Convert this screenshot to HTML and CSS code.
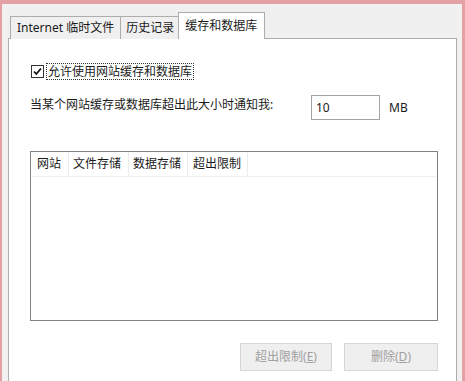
FILE: index.html
```html
<!DOCTYPE html>
<html>
<head>
<meta charset="utf-8" />
<title>网站数据设置</title>
<link rel="stylesheet" href="styles.css">
</head>
<body>
<div class="frame">
  <div class="tabs">
    <div class="tab">Internet 临时文件</div>
    <div class="tab narrow">历史记录</div>
    <div class="tab active">缓存和数据库</div>
  </div>
  <div class="panel">
    <div class="allow">
      <span class="check">
        <svg width="11" height="11" viewBox="0 0 11 11"><path d="M2 5.5 L4.3 8 L9 2.5" fill="none" stroke="#111" stroke-width="1.8"/></svg>
      </span>
      <span class="focus">允许使用网站缓存和数据库</span>
    </div>
    <div class="limit">
      <span class="limit-text">当某个网站缓存或数据库超出此大小时通知我:</span>
      <span class="size">10</span>
      <span class="unit">MB</span>
    </div>
    <div class="list">
      <div class="list-head">
        <span class="col c1">网站</span>
        <span class="col c2">文件存储</span>
        <span class="col c3">数据存储</span>
        <span class="col c4">超出限制</span>
      </div>
    </div>
    <div class="actions">
      <span class="btn b1">超出限制(<u>E</u>)</span>
      <span class="btn b2">删除(<u>D</u>)</span>
    </div>
  </div>
</div>
</body>
</html>
```

FILE: styles.css
```css
* {
  box-sizing: border-box;
  margin: 0;
  padding: 0;
}
body {
  background: #e3a1a4;
  color: #1a1a1a;
  font-family: 'Noto Sans', 'Noto Sans CJK SC', sans-serif;
  font-size: 12px;
  overflow: hidden;
}
.frame {
  background: #f0f0f0;
  height: 377px;
  margin: 4px 3px 0 2px;
  padding: 9px 5px 0 6px;
}
.tabs {
  align-items: flex-end;
  display: flex;
  height: 26px;
  margin-bottom: -1px;
  padding-left: 2px;
  position: relative;
  z-index: 2;
}
.tab {
  background: #f0f0f0;
  border: 1px solid #adadad;
  border-bottom: 0 none;
  height: 23px;
  line-height: 21px;
  margin-right: -1px;
  padding: 0 6px;
}
.tab.narrow {
  padding: 0 5px;
}
.tab.active {
  background: #fff;
  height: 27px;
  line-height: 25px;
  margin-left: -1px;
  padding: 0 7px 0 6px;
}
.panel {
  background: #fff;
  border: 1px solid #adadad;
  height: 350px;
  padding: 23px 18px 0 21px;
}
.allow {
  align-items: center;
  display: flex;
  height: 18px;
}
.check {
  align-items: center;
  border: 1px solid #333;
  display: flex;
  height: 13px;
  justify-content: center;
  margin: 0 2px 0 1px;
  width: 13px;
}
.focus {
  border: 1px dotted #333;
  line-height: 15px;
  padding: 0 1px;
}
.limit {
  align-items: flex-start;
  display: flex;
  margin-top: 15px;
}
.limit-text {
  line-height: 18px;
  margin-top: 1px;
  width: 281px;
}
.size {
  border: 1px solid #a5a5a5;
  height: 25px;
  line-height: 23px;
  padding-left: 4px;
  width: 69px;
}
.unit {
  line-height: 25px;
  margin-left: 9px;
}
.list {
  border: 1px solid #828282;
  height: 170px;
  margin-top: 31px;
}
.list-head {
  border-bottom: 1px solid #f0f0f0;
  display: flex;
  height: 25px;
}
.col {
  border-right: 1px solid #ececec;
  line-height: 24px;
  padding-left: 6px;
}
.c1 { width: 38px; }
.c2 { width: 60px; padding-left: 4px; }
.c3 { width: 59px; padding-left: 4px; }
.c4 { width: 60px; padding-left: 5px; }
.actions {
  display: flex;
  gap: 12px;
  justify-content: flex-end;
  margin-top: 22px;
}
.btn {
  background: #efefef;
  border: 1px solid #d6d6d6;
  color: #a0a0a0;
  height: 28px;
  line-height: 26px;
  text-align: center;
}
.btn u {
  text-decoration: underline;
}
.b1 { width: 92px; }
.b2 { width: 94px; }
```
